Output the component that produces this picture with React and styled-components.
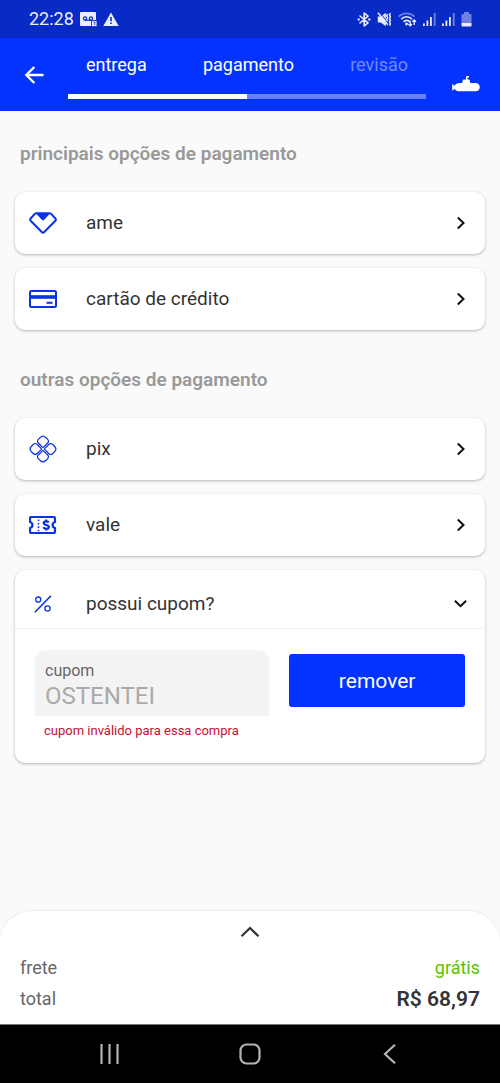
import React, { useState } from "react";
import styled, { createGlobalStyle } from "styled-components";

const GlobalStyle = createGlobalStyle`
  * {
    box-sizing: border-box;
  }

  body {
    margin: 0;
    background-color: #fafafa;
    font-family: Roboto, "Liberation Sans", sans-serif;
    font-size: 18px;
    line-height: 24px;
    color: #333;
  }

  button, input {
    font: inherit;
    color: inherit;
    border: 0;
    margin: 0;
    padding: 0;
    background: none;
  }

  button {
    cursor: pointer;
  }

  svg {
    display: block;
    flex-shrink: 0;
  }
`;

const Page = styled.div`
  min-height: 100vh;
  display: flex;
  flex-direction: column;
`;

const StatusBar = styled.div`
  height: 38px;
  padding: 0 28px 0 29px;
  display: flex;
  align-items: center;
  justify-content: space-between;
  background-color: #092bc5;
  color: #e9edff;
`;

const StatusGroup = styled.div`
  display: flex;
  align-items: center;
  gap: 6px;
`;

const Header = styled.header`
  height: 73px;
  display: flex;
  background-color: #0433ff;
  color: white;
`;

const BackButton = styled.button`
  width: 68px;
  display: flex;
  align-items: center;
  justify-content: center;
`;

const Steps = styled.nav`
  flex: 1;
  padding-top: 15px;
`;

const StepList = styled.ol`
  list-style: none;
  margin: 0 0 17px;
  padding: 0 18px;
  display: flex;
  justify-content: space-between;
`;

const Step = styled.li`
  color: ${props => (props.$pending ? "#7089ff" : "white")};
`;

const Track = styled.div`
  height: 5px;
  background-color: #687fff;
`;

const Progress = styled.div`
  height: 100%;
  background-color: white;
`;

const Brand = styled.div`
  width: 74px;
  padding: 38px 20px 0 26px;
`;

const Main = styled.main`
  flex: 1;
  padding: 0 15px 32px;
`;

const SectionTitle = styled.h2`
  margin: 0;
  padding: ${props => (props.$first ? 31 : 38)}px 5px 26px;
  font-size: 19px;
  font-weight: 600;
  color: #999;
`;

const CardList = styled.div`
  display: flex;
  flex-direction: column;
  gap: 14px;
`;

const Card = styled.div`
  border-radius: 10px;
  background-color: white;
  box-shadow: 0 1px 3px rgba(0, 0, 0, 0.28);
`;

const Option = styled.button`
  width: 100%;
  height: 62px;
  padding: 0 18px 0 14px;
  display: flex;
  align-items: center;
  text-align: left;
`;

const CouponToggle = styled(Option)`
  height: 59px;
  padding-top: 10px;
  border-bottom: 1px solid #f0f0f0;
`;

const OptionIcon = styled.span`
  width: 28px;
  margin-right: 29px;
  display: flex;
  justify-content: center;
  color: #0a32e6;
`;

const OptionLabel = styled.span`
  flex: 1;
  font-size: 19px;
`;

const CouponForm = styled.form`
  padding: 21px 20px;
  display: flex;
  gap: 20px;
`;

const Field = styled.div`
  flex: 4;
  min-width: 0;
`;

const FieldBox = styled.div`
  height: 66px;
  padding: 10px 10px 0;
  border-radius: 10px 10px 0 0;
  background-color: #f3f3f3;
`;

const FieldLabel = styled.label`
  display: block;
  font-size: 16px;
  line-height: 22px;
  color: #666;
`;

const FieldInput = styled.input`
  display: block;
  width: 100%;
  height: 28px;
  font-size: 24px;
  color: #aaa;
  outline: none;
`;

const FieldError = styled.p`
  margin: 4px 0 0;
  padding-left: 9px;
  font-size: 13px;
  line-height: 22px;
  white-space: nowrap;
  color: #c4122f;
`;

const RemoveButton = styled.button`
  flex: 3;
  height: 53px;
  margin-top: 4px;
  border-radius: 3px;
  font-size: 21px;
  background-color: #0433ff;
  color: white;
`;

const Summary = styled.section`
  padding: 0 20px 13px;
  border-radius: 32px 32px 0 0;
  background-color: white;
  box-shadow: 0 -1px 2px rgba(0, 0, 0, 0.06);
`;

const ExpandButton = styled.button`
  width: 100%;
  height: 42px;
  margin-bottom: 3px;
  display: flex;
  align-items: center;
  justify-content: center;
`;

const SummaryList = styled.dl`
  margin: 0;
  display: flex;
  flex-direction: column;
  gap: 7px;
`;

const SummaryRow = styled.div`
  display: flex;
  justify-content: space-between;
  color: #666;
`;

const Shipping = styled.dd`
  margin: 0;
  color: #56c500;
`;

const Total = styled.dd`
  margin: 0;
  font-size: 21px;
  font-weight: 600;
  color: #333;
`;

const SystemNav = styled.nav`
  height: 59px;
  padding: 0 8%;
  display: grid;
  grid-template-columns: repeat(3, 1fr);
  border-top: 1px solid #777;
  background-color: black;
  color: #b4b4b4;
`;

const SystemButton = styled.button`
  display: flex;
  align-items: center;
  justify-content: center;
`;

const VoicemailIcon = () => (
  <svg width="17" height="15" viewBox="0 0 17 15" fill="none">
    <path d="M1 0h14a1 1 0 0 1 1 1v7h-5v6H1a1 1 0 0 1-1-1V1a1 1 0 0 1 1-1Z" fill="currentColor" />
    <circle cx="5" cy="6.5" r="1.6" stroke="#092bc5" strokeWidth="1.2" />
    <circle cx="11" cy="6.5" r="1.6" stroke="#092bc5" strokeWidth="1.2" />
    <path d="M5 8.2h6" stroke="#092bc5" strokeWidth="1.2" />
    <rect x="11.5" y="8.5" width="5.5" height="6" rx="1" fill="currentColor" stroke="#092bc5" strokeWidth="0.8" />
    <path d="M13.3 10h1.5v3" stroke="#092bc5" strokeWidth="0.8" />
  </svg>
);

const WarningIcon = () => (
  <svg width="16" height="15" viewBox="0 0 16 15">
    <path d="M8 .5 15.7 14H.3Z" fill="currentColor" />
    <path d="M7.2 5h1.6v4.2H7.2ZM7.2 10.5h1.6v1.6H7.2Z" fill="#092bc5" />
  </svg>
);

const BluetoothIcon = () => (
  <svg width="14" height="15" viewBox="0 0 14 15" fill="none" stroke="currentColor" strokeWidth="1.6">
    <path d="m3 4 8 6.8L7.2 14V1L11 4.2 3 11" strokeLinejoin="round" strokeLinecap="round" />
    <path d="M.6 7.5h2.2M11.2 7.5h2.2" strokeWidth="2" />
  </svg>
);

const MuteIcon = () => (
  <svg width="15" height="15" viewBox="0 0 15 15" fill="none">
    <path d="M.8 4.600h3L8.800.8v13.400L3.800 10.400h-3Z" fill="currentColor" />
    <path d="M2.600.6 11.500 11" stroke="#092bc5" strokeWidth="1" />
    <path d="M1 .8 10.800 12.800" stroke="currentColor" strokeWidth="1.500" />
    <path d="m10.600 2-.9 1.800.9 1.800-.9 1.800.9 1.800M13.400 1l-.9 1.800.9 1.800-.9 1.800.9 1.800-.9 1.800.9 1.800-.9 1.800" stroke="currentColor" strokeWidth="1.500" />
  </svg>
);

const WifiIcon = () => (
  <svg width="19" height="15" viewBox="0 0 19 15" fill="none" stroke="currentColor" strokeWidth="1.7">
    <path d="M.8 4.600C4.800.2 12.400.2 16.400 4.600" opacity="0.45" />
    <path d="M3.200 7.200c3-3.300 7.800-3.300 10.800 0M5.600 9.800c1.700-1.800 4.300-1.800 6 0" />
    <circle cx="8.500" cy="12" r="1.400" fill="currentColor" stroke="none" />
    <path d="M12.200 8.500V14M10.500 12l1.700 1.900 1.700-1.900M16.200 13V8M14.500 9.800l1.700-1.900 1.700 1.900" strokeWidth="1.300" />
  </svg>
);

const SignalIcon = () => (
  <svg width="13" height="15" viewBox="0 0 13 15" fill="currentColor">
    <rect x="0" y="11.500" width="1.800" height="2.500" />
    <rect x="3.500" y="8.500" width="1.800" height="5.500" />
    <rect x="7" y="5" width="1.800" height="9" />
    <rect x="10.800" y="1" width="1.800" height="13" opacity="0.45" />
  </svg>
);

const BatteryIcon = () => (
  <svg width="11" height="15" viewBox="0 0 11 15">
    <path d="M3 0h5v2h1.500a1 1 0 0 1 1 1v8H.5V3a1 1 0 0 1 1-1H3Z" fill="#6f82e4" />
    <path d="M.5 11h10v2.500a1 1 0 0 1-1 1h-8a1 1 0 0 1-1-1Z" fill="currentColor" />
  </svg>
);

const BackIcon = () => (
  <svg width="20" height="18" viewBox="0 0 20 18" fill="none" stroke="currentColor" strokeWidth="2.400">
    <path d="M19.500 9H2.200M10.300 1l-8 8 8 8" />
  </svg>
);

const SubmarineIcon = () => (
  <svg width="28" height="16" viewBox="0 0 28 16" fill="currentColor">
    <path d="M14 1.200c0-.8.500-1.200 1.200-1.200H17v1.400h-1.500V3.500h1.200c.7 0 1 .4 1.100 1l.4 2.500h5.300c2.500 0 4.300 1.900 4.300 4.200s-1.800 4.100-4.300 4.100H7.500c-2.300 0-4-1-5.300-2.600L1 14.500H.2V8.200H1l1.200 1.700C3.500 8.200 5.200 7 7.500 7h2.700l.5-2.500c.1-.6.500-1 1.100-1H14Z" />
  </svg>
);

const AmeIcon = () => (
  <svg width="28" height="22" viewBox="0 0 28 22" fill="none" stroke="currentColor" strokeWidth="2" strokeLinejoin="round">
    <path d="M7.500 1.200h13c.7 0 1.200.2 1.700.7l4.200 4.600c.6.700.6 1.500 0 2.200L15 20.200c-.6.600-1.400.6-2 0L1.600 8.700C1 8 1 7.200 1.600 6.500l4.200-4.600c.5-.5 1-.7 1.700-.7Z" />
    <path d="M7 1.500h14l-5.800 6.300c-.7.800-1.700.8-2.400 0Z" fill="currentColor" stroke="none" />
  </svg>
);

const CardIcon = () => (
  <svg width="28" height="18" viewBox="0 0 28 18" fill="none" stroke="currentColor">
    <rect x="1" y="1" width="26" height="16" rx="1.500" strokeWidth="2" />
    <path d="M1 7h26" strokeWidth="3.600" />
    <path d="M17.500 12.800h6" strokeWidth="2" />
  </svg>
);

const PixIcon = () => (
  <svg width="28" height="28" viewBox="0 0 28 28" fill="none" stroke="currentColor" strokeWidth="1.200">
    {[45, 135, 225, 315].map(angle => (
      <path
        key={angle}
        transform={`translate(14 14) rotate(${angle})`}
        d="M1.400.9H7.200C9.200.9 10.100 1.800 10.100 3.800V6.200C10.100 8.600 8.600 10.100 6.200 10.100H3.800C1.800 10.100.9 9.200.9 7.200V1.400Q.9.900 1.400.9Z"
      />
    ))}
  </svg>
);

const VoucherIcon = () => (
  <svg width="28" height="18" viewBox="0 0 28 18" fill="none" stroke="currentColor" strokeWidth="2.200">
    <path d="M2.500 1h22c1 0 1.500.5 1.500 1.500V6c-3.200.8-3.200 5.200 0 6v3.500c0 1-.5 1.500-1.500 1.500h-22C1.500 17 1 16.500 1 15.500V12c3.200-.8 3.200-5.200 0-6V2.500C1 1.500 1.500 1 2.500 1Z" strokeLinejoin="round" />
    <path d="M9.500 3.500v12" strokeWidth="1.600" strokeDasharray="1.600 1.800" />
    <path d="M19.800 6.600c-.5-1-1.400-1.300-2.600-1.300-1.500 0-2.500.7-2.500 1.800 0 2.600 5.200 1.300 5.200 3.800 0 1.200-1.100 1.900-2.700 1.900-1.400 0-2.400-.5-2.800-1.600M17.200 3.600v2M17.200 12.500v2" strokeWidth="2.200" />
  </svg>
);

const PercentIcon = () => (
  <svg width="18" height="18" viewBox="0 0 18 18" fill="none" stroke="currentColor" strokeWidth="1.300">
    <path d="M.9 17.200 17 .8" strokeWidth="1.600" />
    <circle cx="4.200" cy="4.600" r="2.600" />
    <circle cx="13.500" cy="13.500" r="2.600" />
  </svg>
);

const ChevronRight = () => (
  <svg width="12" height="14" viewBox="0 0 12 14" fill="none" stroke="#111" strokeWidth="2">
    <path d="m2.800 1.500 5.700 5.500-5.700 5.500" />
  </svg>
);

const ChevronDown = () => (
  <svg width="13" height="10" viewBox="0 0 13 10" fill="none" stroke="#111" strokeWidth="2">
    <path d="m.9 1.700 5.600 5.500 5.600-5.500" />
  </svg>
);

const ChevronUp = () => (
  <svg width="20" height="12" viewBox="0 0 20 12" fill="none" stroke="#333" strokeWidth="2.200">
    <path d="M1.500 10.300 10 2l8.500 8.300" />
  </svg>
);

const PaymentOption = ({ icon, label }) => {
  return (
    <Card>
      <Option type="button">
        <OptionIcon>{icon}</OptionIcon>
        <OptionLabel>{label}</OptionLabel>
        <ChevronRight />
      </Option>
    </Card>
  );
};

const Coupon = () => {
  const [open, setOpen] = useState(true);
  const [code, setCode] = useState("OSTENTEI");

  const handleSubmit = e => {
    e.preventDefault();
    setCode("");
  };

  return (
    <Card>
      <CouponToggle type="button" aria-expanded={open} onClick={() => setOpen(!open)}>
        <OptionIcon>
          <PercentIcon />
        </OptionIcon>
        <OptionLabel>possui cupom?</OptionLabel>
        <ChevronDown />
      </CouponToggle>
      {open && (
        <CouponForm onSubmit={handleSubmit}>
          <Field>
            <FieldBox>
              <FieldLabel htmlFor="cupom">cupom</FieldLabel>
              <FieldInput id="cupom" value={code} onChange={e => setCode(e.target.value)} />
            </FieldBox>
            {code && <FieldError>cupom inválido para essa compra</FieldError>}
          </Field>
          <RemoveButton type="submit">remover</RemoveButton>
        </CouponForm>
      )}
    </Card>
  );
};

const App = () => {
  return (
    <>
      <GlobalStyle />
      <Page>
        <StatusBar>
          <StatusGroup>
            <span>22:28</span>
            <VoicemailIcon />
            <WarningIcon />
          </StatusGroup>
          <StatusGroup>
            <BluetoothIcon />
            <MuteIcon />
            <WifiIcon />
            <SignalIcon />
            <SignalIcon />
            <BatteryIcon />
          </StatusGroup>
        </StatusBar>

        <Header>
          <BackButton type="button" aria-label="voltar">
            <BackIcon />
          </BackButton>
          <Steps>
            <StepList>
              <Step>entrega</Step>
              <Step>pagamento</Step>
              <Step $pending>revisão</Step>
            </StepList>
            <Track>
              <Progress style={{ width: "50%" }} />
            </Track>
          </Steps>
          <Brand>
            <SubmarineIcon />
          </Brand>
        </Header>

        <Main>
          <SectionTitle $first>principais opções de pagamento</SectionTitle>
          <CardList>
            <PaymentOption icon={<AmeIcon />} label="ame" />
            <PaymentOption icon={<CardIcon />} label="cartão de crédito" />
          </CardList>

          <SectionTitle>outras opções de pagamento</SectionTitle>
          <CardList>
            <PaymentOption icon={<PixIcon />} label="pix" />
            <PaymentOption icon={<VoucherIcon />} label="vale" />
            <Coupon />
          </CardList>
        </Main>

        <Summary>
          <ExpandButton type="button" aria-label="ver resumo">
            <ChevronUp />
          </ExpandButton>
          <SummaryList>
            <SummaryRow>
              <dt>frete</dt>
              <Shipping>grátis</Shipping>
            </SummaryRow>
            <SummaryRow>
              <dt>total</dt>
              <Total>R$ 68,97</Total>
            </SummaryRow>
          </SummaryList>
        </Summary>

        <SystemNav>
          <SystemButton type="button" aria-label="recentes">
            <svg width="20" height="20" viewBox="0 0 20 20" stroke="currentColor" strokeWidth="2.200">
              <path d="M1.500 0v20M9.500 0v20M17.500 0v20" />
            </svg>
          </SystemButton>
          <SystemButton type="button" aria-label="início">
            <svg width="22" height="22" viewBox="0 0 22 22" fill="none" stroke="currentColor" strokeWidth="2.200">
              <rect x="1.500" y="1.500" width="19" height="19" rx="6" />
            </svg>
          </SystemButton>
          <SystemButton type="button" aria-label="voltar">
            <svg width="14" height="20" viewBox="0 0 14 20" fill="none" stroke="currentColor" strokeWidth="2.200">
              <path d="M12 .8 2 10l10 9.200" />
            </svg>
          </SystemButton>
        </SystemNav>
      </Page>
    </>
  );
};

export default App;
